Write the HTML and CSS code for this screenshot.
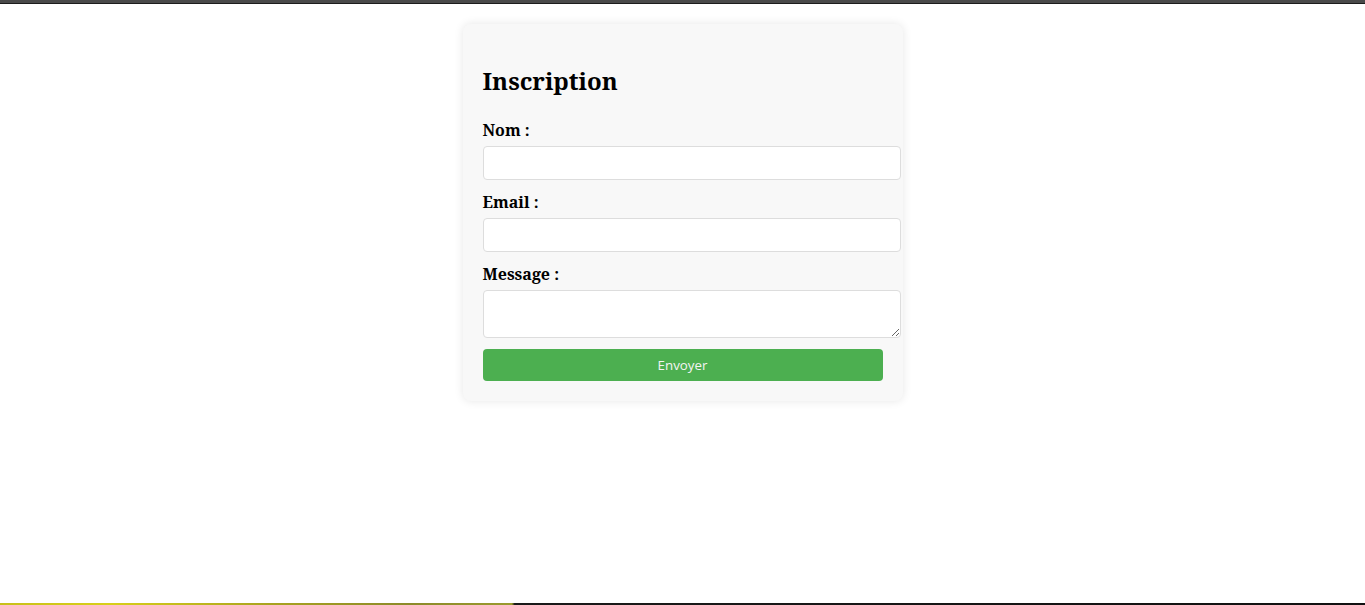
FILE: index.html
```html
<!DOCTYPE html>
<html lang="fr">
<head>
<meta charset="utf-8">
<title>Inscription</title>
<link rel="stylesheet" href="styles.css">
</head>
<body>
<div class="topbar"></div>
<main class="page">
  <form class="card">
    <h2 class="title">Inscription</h2>
    <label class="label" for="nom">Nom :</label>
    <input class="field" type="text" id="nom">
    <label class="label" for="email">Email :</label>
    <input class="field" type="email" id="email">
    <label class="label" for="message">Message :</label>
    <textarea class="field area" id="message"></textarea>
    <button class="submit" type="button">Envoyer</button>
  </form>
</main>
<div class="bottombar"></div>
</body>
</html>
```

FILE: styles.css
```css
html, body {
  margin: 0;
  padding: 0;
  background: #fff;
}
body {
  min-height: 100vh;
  display: flex;
  flex-direction: column;
  font-family: "Noto Serif", "DejaVu Serif", "Liberation Serif", serif;
  color: #000;
}
.topbar {
  height: 3px;
  background: #4a4a4a;
  border-bottom: 1px solid #1c1c1c;
}
.page {
  flex: 1;
}
.card {
  width: 400px;
  margin: 20px auto;
  padding: 20px;
  background: #f8f8f8;
  border-radius: 8px;
  box-shadow: 0 0 10px rgba(0, 0, 0, 0.1);
  display: flex;
  flex-direction: column;
  align-items: flex-start;
}
.title {
  font-size: 24px;
  font-weight: bold;
  margin: 20px 0 22px;
  line-height: 33px;
}
.label {
  display: block;
  font-weight: bold;
  font-size: 16px;
  line-height: 22px;
  margin-bottom: 5px;
}
.field {
  box-sizing: content-box;
  width: 400px;
  height: 16px;
  padding: 8px;
  margin: 0 0 11px;
  border: 1px solid #ddd;
  border-radius: 4px;
  background: #fff;
  font-family: "Open Sans", "Liberation Sans", sans-serif;
  font-size: 13.33px;
  flex-shrink: 0;
}
.area {
  height: 30px;
  resize: vertical;
  font-family: "DejaVu Sans Mono", monospace;
}
.submit {
  width: 400px;
  height: 32px;
  padding: 0;
  border: none;
  border-radius: 4px;
  background: #4caf50;
  color: #f4f4f4;
  font-family: "Open Sans", "Liberation Sans", sans-serif;
  font-size: 13.33px;
  cursor: pointer;
}
.bottombar {
  height: 2px;
  background: linear-gradient(90deg, #c8c01a 0%, #d8cf1a 8%, #a8a220 20%, #8c8a2a 30%, #9a9a2e 37.5%, #1a1a1a 37.7%, #111 100%);
}
```
